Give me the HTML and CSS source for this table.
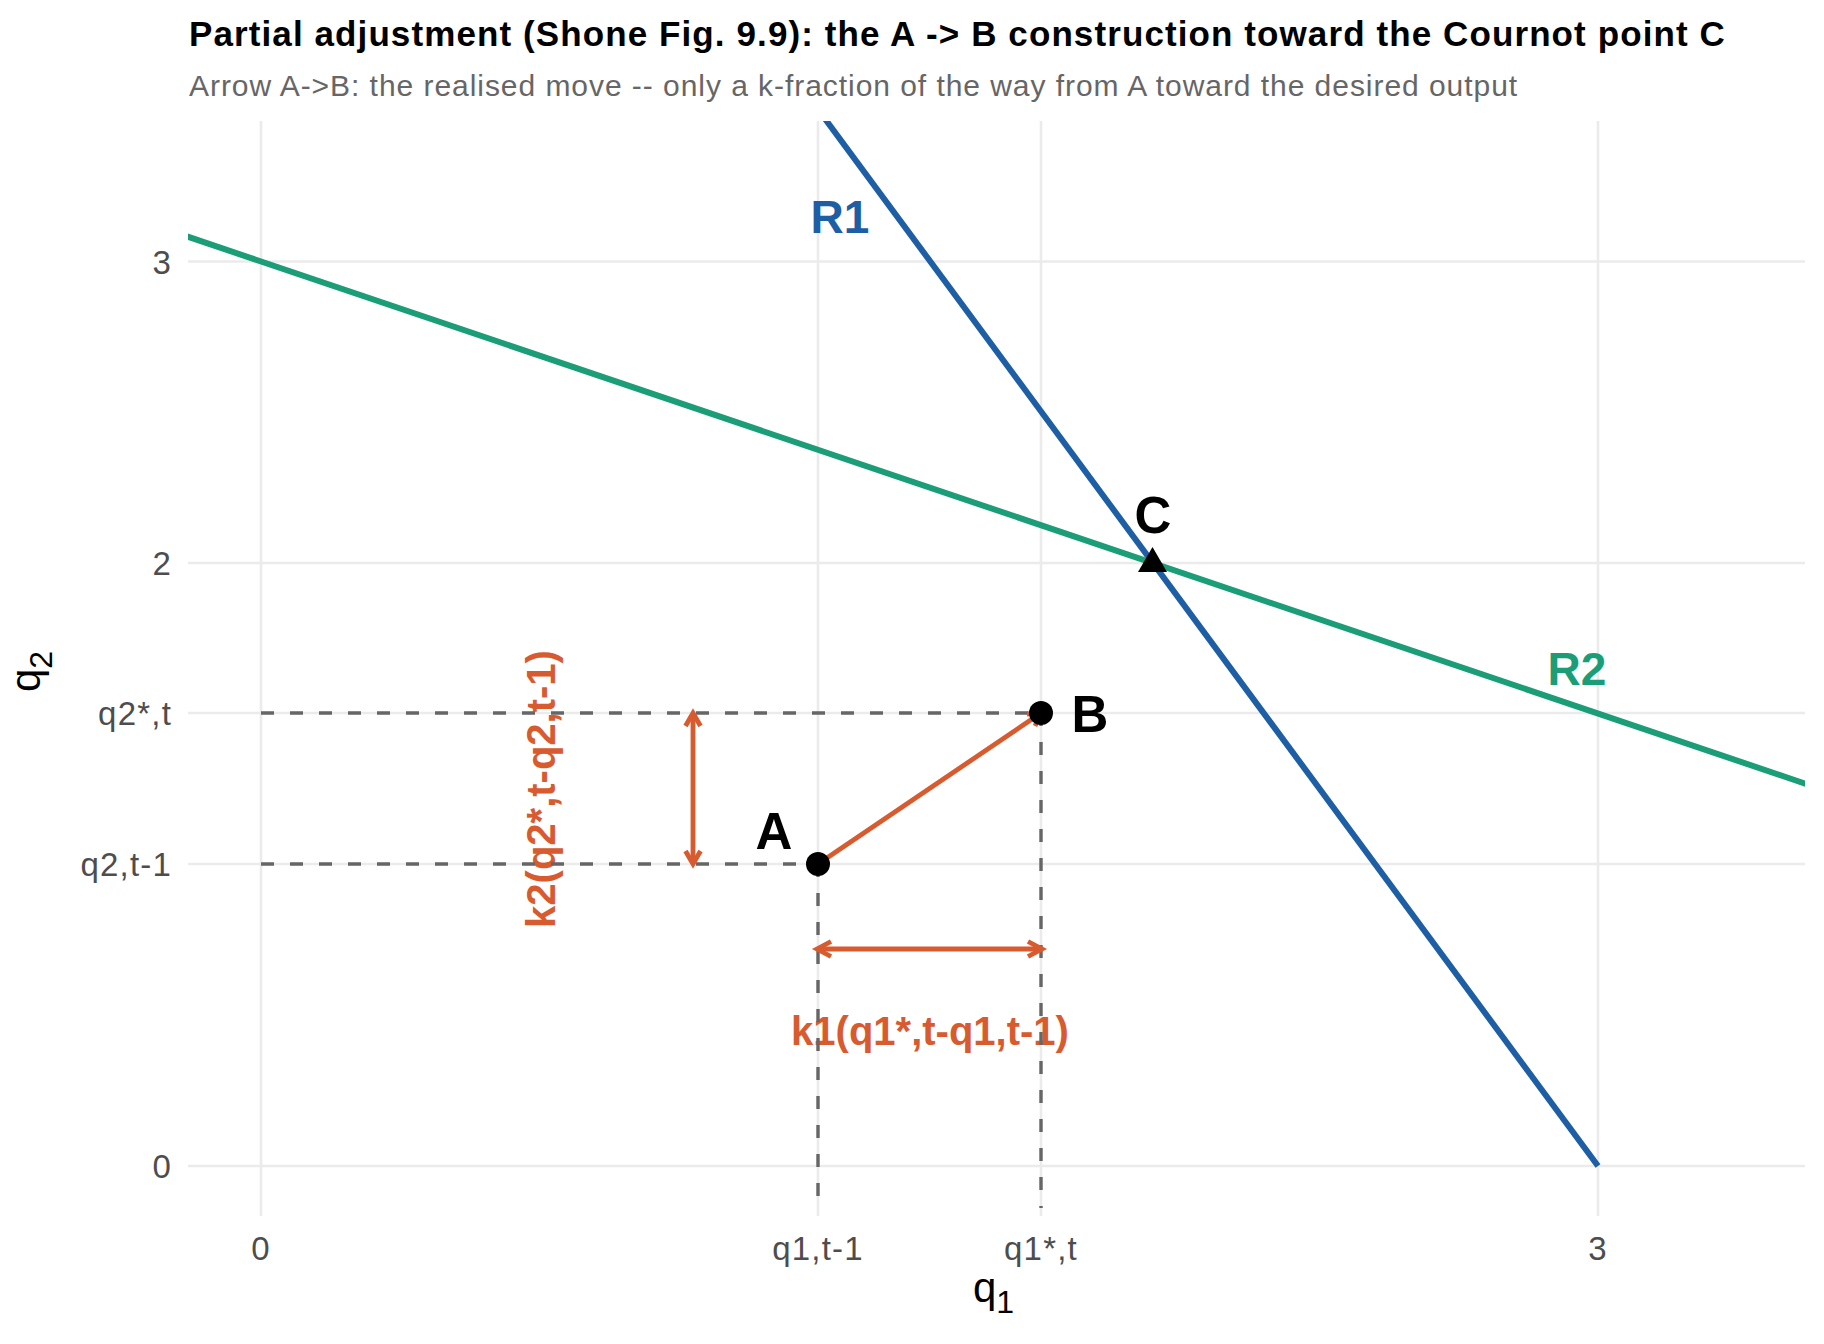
FILE: index.html
```html
<!DOCTYPE html>
<html lang="en">
<head>
<meta charset="utf-8">
<title>Partial adjustment</title>
<link rel="stylesheet" href="styles.css">
</head>
<body>
<div class="figure">
  <header class="titles">
    <h1 class="title">Partial adjustment (Shone Fig. 9.9): the A -&gt; B construction toward the Cournot point C</h1>
    <p class="subtitle">Arrow A-&gt;B: the realised move -- only a k-fraction of the way from A toward the desired output</p>
  </header>
  <svg class="plot" width="1824" height="1234" viewBox="0 110 1824 1234" xmlns="http://www.w3.org/2000/svg">
    <defs>
      <clipPath id="panel"><rect x="188" y="121" width="1617" height="1095"/></clipPath>
    </defs>
    <g class="grid">
      <line x1="261" y1="121" x2="261" y2="1216"/>
      <line x1="818" y1="121" x2="818" y2="1216"/>
      <line x1="1041" y1="121" x2="1041" y2="1216"/>
      <line x1="1598" y1="121" x2="1598" y2="1216"/>
      <line x1="188" y1="261.5" x2="1805" y2="261.5"/>
      <line x1="188" y1="563" x2="1805" y2="563"/>
      <line x1="188" y1="713" x2="1805" y2="713"/>
      <line x1="188" y1="864" x2="1805" y2="864"/>
      <line x1="188" y1="1166" x2="1805" y2="1166"/>
    </g>
    <text class="lab lab-k" x="930" y="1045">k1(q1*,t-q1,t-1)</text>
    <text class="lab lab-k" transform="translate(555,789) rotate(-90)">k2(q2*,t-q2,t-1)</text>
    <g class="dash">
      <line x1="261" y1="713" x2="1041" y2="713"/>
      <line x1="261" y1="864" x2="818" y2="864"/>
      <line x1="818" y1="864" x2="818" y2="1208"/>
      <line x1="1041" y1="713" x2="1041" y2="1208"/>
    </g>
    <g clip-path="url(#panel)">
      <line class="r1" x1="818.5" y1="110" x2="1598" y2="1166"/>
      <line class="r2" x1="160" y1="227.3" x2="1830" y2="792"/>
    </g>
    <g class="adj">
      <line x1="818" y1="864" x2="1041" y2="713"/>
      <polyline points="1027,714 1041,713 1035,726"/>
      <line x1="693" y1="715" x2="693" y2="862"/>
      <polyline points="685.5,726 693,713 700.5,726"/>
      <polyline points="685.5,851 693,864 700.5,851"/>
      <line x1="819" y1="949" x2="1040" y2="949"/>
      <polyline points="831,941.5 817,949 831,956.5"/>
      <polyline points="1028,941.5 1042,949 1028,956.5"/>
    </g>
    <g class="pts">
      <circle cx="818" cy="864" r="12"/>
      <circle cx="1041" cy="713" r="12"/>
      <polygon points="1152.5,547 1138,572 1167,572"/>
    </g>
    <g class="ticks">
      <text class="ytick" x="172" y="273.5">3</text>
      <text class="ytick" x="172" y="575">2</text>
      <text class="ytick" x="172" y="725">q2*,t</text>
      <text class="ytick" x="172" y="876">q2,t-1</text>
      <text class="ytick" x="172" y="1178">0</text>
      <text class="xtick" x="261" y="1260">0</text>
      <text class="xtick" x="818" y="1260">q1,t-1</text>
      <text class="xtick" x="1041" y="1260">q1*,t</text>
      <text class="xtick" x="1598" y="1260">3</text>
    </g>
    <text class="axis-title" x="973" y="1302">q<tspan class="sub" dy="11">1</tspan></text>
    <text class="axis-title" transform="translate(40,692) rotate(-90)">q<tspan class="sub" dy="12">2</tspan></text>
    <text class="lab lab-r1" x="840" y="233">R1</text>
    <text class="lab lab-r2" x="1577" y="685">R2</text>
    <text class="lab lab-pt" x="1153" y="533">C</text>
    <text class="lab lab-pt" x="1090" y="731.5">B</text>
    <text class="lab lab-pt" x="774" y="848.5">A</text>
  </svg>
</div>
</body>
</html>
```

FILE: styles.css
```css
html, body {
  margin: 0;
  padding: 0;
  background: #ffffff;
}

.figure {
  width: 1824px;
  height: 1344px;
  display: flex;
  flex-direction: column;
  font-family: "Liberation Sans", Arial, sans-serif;
}

.titles {
  height: 110px;
  box-sizing: border-box;
  padding: 14px 0 0 189px;
}

.title {
  margin: 0;
  font-size: 35px;
  line-height: 40px;
  font-weight: bold;
  letter-spacing: 1.1px;
  color: #000000;
  white-space: nowrap;
}

.subtitle {
  margin: 14px 0 0 0;
  font-size: 30px;
  line-height: 36px;
  letter-spacing: 0.95px;
  color: #666666;
  white-space: nowrap;
}

.plot {
  display: block;
}

.grid line {
  stroke: #EBEBEB;
  stroke-width: 2.6;
}

.dash line {
  stroke: #666666;
  stroke-width: 3.4;
  stroke-dasharray: 13 16;
}

.r1 {
  stroke: #1E5EA5;
  stroke-width: 6;
}

.r2 {
  stroke: #1B9E77;
  stroke-width: 6;
}

.adj line,
.adj polyline {
  stroke: #D85B30;
  stroke-width: 4.8;
  fill: none;
  stroke-linejoin: miter;
}

.pts circle,
.pts polygon {
  fill: #000000;
}

.ticks text {
  font-family: "Liberation Sans", Arial, sans-serif;
  font-size: 33px;
  letter-spacing: 1.2px;
  fill: #4D4D4D;
}

.ytick {
  text-anchor: end;
}

.xtick {
  text-anchor: middle;
}

.axis-title {
  font-family: "Liberation Sans", Arial, sans-serif;
  font-size: 42px;
  fill: #000000;
}

.axis-title .sub {
  font-size: 32px;
}

.lab {
  font-family: "Liberation Sans", Arial, sans-serif;
  font-weight: bold;
  text-anchor: middle;
}

.lab-r1 {
  font-size: 46px;
  fill: #1E5EA5;
}

.lab-r2 {
  font-size: 46px;
  fill: #1B9E77;
}

.lab-pt {
  font-size: 51px;
  fill: #000000;
}

.lab-k {
  font-size: 40px;
  fill: #D85B30;
}
```
